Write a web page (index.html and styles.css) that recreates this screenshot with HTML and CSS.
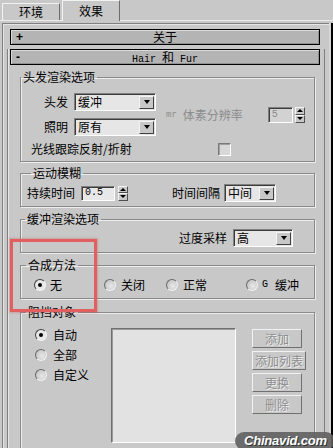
FILE: index.html
```html
<!DOCTYPE html>
<html lang="zh">
<head>
    <meta charset="UTF-8">
    <meta name="viewport" content="width=device-width, initial-scale=1.0">
    <title>Hair 和 Fur</title>
    <link rel="stylesheet" href="styles.css">
</head>
<body>
    <div class="tabs">
        <div class="tab">环境</div>
        <div class="tab active">效果</div>
    </div>

    <div class="main">
        <div class="panel">
            <div class="roll-head"><span class="sign">+</span><span class="title">关于</span></div>

            <div class="rollout">
                <div class="roll-head"><span class="sign">-</span><span class="title"><span class="lat">Hair </span>和<span class="lat"> Fur</span></span></div>

                <!-- hair render options -->
                <fieldset class="group g-hair">
                    <legend>头发渲染选项</legend>
                    <div class="hair-top">
                        <div class="hair-left">
                            <div class="row">
                                <span class="lbl">头发</span>
                                <div class="drop d-hair"><span>缓冲</span><i class="arrow"></i></div>
                            </div>
                            <div class="row">
                                <span class="lbl">照明</span>
                                <div class="drop d-hair"><span>原有</span><i class="arrow"></i></div>
                            </div>
                        </div>
                        <span class="mr">mr</span>
                        <span class="dim">体素分辨率</span>
                        <div class="spin spin-res">
                            <div class="field off"><span class="lat">5</span></div>
                            <div class="spin-btns"><i class="up"></i><i class="down"></i></div>
                        </div>
                    </div>
                    <div class="row trace">
                        <span class="trace-text">光线跟踪反射/折射</span>
                        <span class="check"></span>
                    </div>
                </fieldset>

                <!-- motion blur -->
                <fieldset class="group g-motion">
                    <legend>运动模糊</legend>
                    <div class="row">
                        <span>持续时间</span>
                        <div class="spin spin-dur">
                            <div class="field"><span class="lat">0.5</span></div>
                            <div class="spin-btns"><i class="up"></i><i class="down"></i></div>
                        </div>
                        <span class="interval">时间间隔</span>
                        <div class="drop d-interval"><span>中间</span><i class="arrow"></i></div>
                    </div>
                </fieldset>

                <!-- buffer render options -->
                <fieldset class="group g-buffer">
                    <legend>缓冲渲染选项</legend>
                    <div class="row">
                        <span>过度采样</span>
                        <div class="drop d-sample"><span>高</span><i class="arrow"></i></div>
                    </div>
                </fieldset>

                <!-- composite method -->
                <fieldset class="group g-comp">
                    <legend>合成方法</legend>
                    <div class="row">
                        <label class="radio r1"><i class="dot on"></i>无</label>
                        <label class="radio r2"><i class="dot"></i>关闭</label>
                        <label class="radio r3"><i class="dot"></i>正常</label>
                        <label class="radio r4"><i class="dot"></i><span class="lat">G</span><span class="g-buf">缓冲</span></label>
                    </div>
                </fieldset>

                <!-- occlusion objects -->
                <fieldset class="group g-occl">
                    <legend>阻挡对象</legend>
                    <div class="occl">
                        <div class="occl-radios">
                            <label class="radio"><i class="dot on"></i>自动</label>
                            <label class="radio"><i class="dot"></i>全部</label>
                            <label class="radio"><i class="dot"></i>自定义</label>
                        </div>
                        <div class="listbox"></div>
                        <div class="btns">
                            <div class="btn">添加</div>
                            <div class="btn wide">添加列表</div>
                            <div class="btn">更换</div>
                            <div class="btn">删除</div>
                        </div>
                    </div>
                </fieldset>
            </div>
        </div>
        <div class="scroll"></div>
    </div>

    <div class="highlight"></div>
    <div class="watermark">Chinavid.com</div>
</body>
</html>
```

FILE: styles.css
```css
* {
    box-sizing: border-box;
}

body {
    margin: 0;
    width: 333px;
    height: 448px;
    overflow: hidden;
    position: relative;
    background: #c8c8c8;
    color: #000;
    font-family: "Noto Sans CJK SC", "Liberation Sans", sans-serif;
    font-size: 12px;
    line-height: 14px;
}

.lat {
    font-family: "Liberation Mono", monospace;
    font-size: 10px;
}

/* tabs */
.tabs {
    display: flex;
    align-items: flex-end;
    gap: 2px;
    height: 21px;
    padding-left: 2px;
    border-bottom: 1px solid #ececec;
}

.tab {
    width: 58px;
    height: 17px;
    border: 1px solid #f2f2f2;
    border-right-color: #6c6c6c;
    border-bottom: none;
    text-align: center;
    line-height: 16px;
}

.tab.active {
    height: 21px;
    margin-bottom: -1px;
    background: #c8c8c8;
    line-height: 19px;
}

/* panel */
.main {
    display: flex;
    height: 427px;
}

.panel {
    flex: 1;
    margin: 2px 0 0 2px;
    border-top: 1px solid #808080;
    border-left: 1px solid #808080;
    box-shadow: inset 1px 1px 0 #e4e4e4;
    overflow: hidden;
}

.scroll {
    width: 4px;
    margin-top: 2px;
    border-left: 2px solid #d6d6d6;
    background: #000;
}

.roll-head {
    display: flex;
    height: 16px;
    margin: 5px 9px 0 7px;
    border: 1px solid #000;
    background: #b4b4b4;
    box-shadow: inset 1px 1px 0 #dadada, inset -1px -1px 0 #909090;
}

.sign {
    width: 14px;
    padding-left: 5px;
    font-family: "Liberation Sans", sans-serif;
    font-weight: bold;
    font-size: 12px;
}

.title {
    flex: 1;
    margin-right: 14px;
    text-align: center;
}

.rollout {
    margin: 12px 4px 0 4px;
    border-left: 1px solid #808080;
    border-right: 1px solid #808080;
    box-shadow: inset 1px 0 0 #e6e6e6;
}

.rollout .roll-head {
    margin: -8px 4px 0 2px;
}

/* group boxes */
.group {
    margin: 5px 9px 0 12px;
    padding: 0;
    min-width: 0;
    border: 1px solid #8a8a8a;
    box-shadow: 1px 1px 0 #ececec, inset 1px 1px 0 #ececec;
}

.group legend {
    padding: 0 2px;
    margin-left: 4px;
    line-height: 14px;
}

.row {
    display: flex;
    align-items: center;
}

.g-hair {
    padding: 9px 0 5px 0;
}

.g-hair legend {
    margin-left: 0;
}

.hair-top {
    display: flex;
    align-items: center;
}

.hair-left {
    display: flex;
    flex-direction: column;
    gap: 7px;
}

.lbl {
    width: 47px;
    margin-right: 6px;
    text-align: right;
}

.drop {
    display: flex;
    align-items: center;
    justify-content: space-between;
    height: 18px;
    padding: 0 1px 0 3px;
    background: #e6e6e6;
    border: 1px solid;
    border-color: #808080 #fff #fff #808080;
    box-shadow: inset 1px 1px 0 #3c3c3c;
}

.arrow {
    display: flex;
    align-items: center;
    justify-content: center;
    width: 15px;
    height: 13px;
    background: #c8c8c8;
    border: 1px solid;
    border-color: #f4f4f4 #404040 #404040 #f4f4f4;
}

.arrow::after {
    content: "";
    border-left: 3px solid transparent;
    border-right: 3px solid transparent;
    border-top: 4px solid #000;
}

.d-hair {
    width: 82px;
}

.mr {
    margin-left: 10px;
    color: #8c8c8c;
    font-family: "Liberation Mono", monospace;
    font-size: 9px;
}

.dim {
    margin-left: 6px;
    color: #8c8c8c;
}

.spin {
    display: flex;
    gap: 2px;
}

.spin-res {
    margin-left: 25px;
}

.field {
    display: flex;
    align-items: center;
    width: 25px;
    height: 16px;
    padding-left: 3px;
    background: #e8e8e8;
    border: 1px solid;
    border-color: #808080 #fff #fff #808080;
    box-shadow: inset 1px 1px 0 #3c3c3c;
}

.field.off {
    background: #d2d2d2;
    color: #8c8c8c;
}

.spin-btns {
    display: flex;
    flex-direction: column;
    width: 10px;
    height: 16px;
}

.spin-btns i {
    flex: 1;
    display: flex;
    align-items: center;
    justify-content: center;
    background: #c8c8c8;
    border: 1px solid;
    border-color: #f4f4f4 #505050 #505050 #f4f4f4;
}

.spin-btns .up::after {
    content: "";
    border-left: 3px solid transparent;
    border-right: 3px solid transparent;
    border-bottom: 3px solid #000;
}

.spin-btns .down::after {
    content: "";
    border-left: 3px solid transparent;
    border-right: 3px solid transparent;
    border-top: 3px solid #000;
}

.trace {
    height: 14px;
    margin-top: 6px;
    padding-left: 10px;
}

.trace-text {
    width: 187px;
}

.check {
    width: 13px;
    height: 13px;
    background: #d8d8d8;
    border: 1px solid;
    border-color: #7a7a7a #fff #fff #7a7a7a;
    box-shadow: inset 1px 1px 0 #a0a0a0;
}

/* motion blur */
.g-motion {
    margin-top: 4px;
    padding: 4px 0 4px 6px;
}

.g-motion .row {
    height: 18px;
}

.spin-dur {
    margin-left: 6px;
    gap: 3px;
}

.spin-dur .field {
    width: 34px;
    height: 15px;
}

.spin-dur .spin-btns {
    height: 15px;
}

.interval {
    margin-left: 44px;
}

.d-interval {
    width: 52px;
    margin-left: 4px;
}

/* buffer */
.g-buffer {
    padding: 3px 21px 5px 0;
}

.g-buffer .row {
    justify-content: flex-end;
}

.d-sample {
    width: 60px;
    margin-left: 6px;
}

/* radios */
.g-comp {
    padding: 6px 0 6px 0;
}

.g-comp legend,
.g-occl legend {
    margin-left: 5px;
}

.radio {
    display: flex;
    align-items: center;
    height: 14px;
}

.dot {
    display: flex;
    align-items: center;
    justify-content: center;
    width: 12px;
    height: 12px;
    margin-right: 4px;
    border-radius: 50%;
    border: 1px solid;
    border-color: #6a6a6a #f0f0f0 #f0f0f0 #6a6a6a;
    background: radial-gradient(circle at 60% 60%, #e8e8e8 0%, #c4c4c4 80%);
}

.dot.on {
    background: #e8e8e8;
    border-color: #404040 #f4f4f4 #f4f4f4 #404040;
}

.dot.on::after {
    content: "";
    width: 4px;
    height: 4px;
    border-radius: 50%;
    background: #000;
}

.r1 {
    margin-left: 13px;
}

.r2 {
    margin-left: 42px;
}

.r2 .dot,
.r3 .dot {
    margin-right: 5px;
}

.r3 {
    margin-left: 21px;
}

.r4 {
    margin-left: 39px;
}

.g-buf {
    margin-left: 7px;
}

/* occlusion */
.g-occl {
    margin-top: 6px;
    padding: 9px 0 20px 0;
}

.occl {
    display: flex;
    align-items: flex-start;
}

.occl-radios {
    display: flex;
    flex-direction: column;
    gap: 6px;
    width: 76px;
    margin-left: 14px;
}

.occl-radios .dot {
    margin-right: 6px;
}

.listbox {
    width: 125px;
    height: 115px;
    background: #e2e2e2;
    border: 1px solid;
    border-color: #707070 #fff #fff #707070;
    box-shadow: inset 1px 1px 0 #9a9a9a;
}

.btns {
    display: flex;
    flex-direction: column;
    gap: 3px;
    margin: 1px 0 0 16px;
}

.btn {
    width: 50px;
    height: 19px;
    text-align: center;
    line-height: 17px;
    color: #8e8e8e;
    text-shadow: 1px 1px 0 #f0f0f0;
    border: 1px solid;
    border-color: #f2f2f2 #707070 #707070 #f2f2f2;
}

.btn.wide {
    width: 54px;
}

/* overlays */
.highlight {
    position: absolute;
    left: 10px;
    top: 239px;
    width: 87px;
    height: 73px;
    border: 3px solid #e25f5f;
    box-shadow: 0 0 2px 1px rgba(200, 80, 80, 0.35);
}

.watermark {
    position: absolute;
    left: 235px;
    top: 432px;
    width: 100px;
    height: 18px;
    padding-left: 9px;
    border-radius: 9px;
    background: rgba(96, 96, 96, 0.9);
    color: #fff;
    font-family: "Liberation Sans", sans-serif;
    font-size: 13px;
    font-weight: bold;
    font-style: italic;
    line-height: 17px;
    letter-spacing: -0.2px;
    text-shadow: 1px 1px 0 #333;
}
```
